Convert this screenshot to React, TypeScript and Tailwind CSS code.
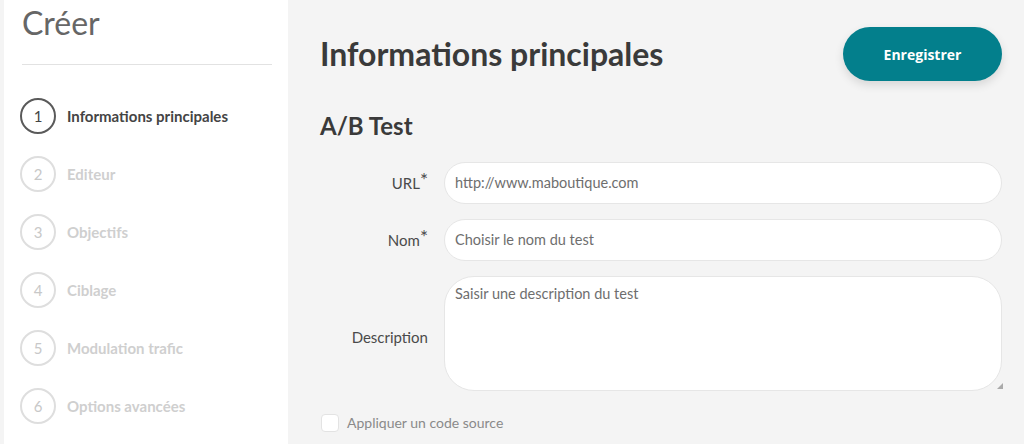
import React from "react";

const STEPS = [
  "Informations principales",
  "Editeur",
  "Objectifs",
  "Ciblage",
  "Modulation trafic",
  "Options avancées",
];

function Step({ n, label, active }: { n: number; label: string; active: boolean }) {
  return (
    <div className="flex items-center h-[58px]">
      <div
        className={
          "w-[36px] h-[36px] rounded-full flex items-center justify-center text-[15px] border-2 " +
          (active ? "border-[#5a5a5a] text-[#444]" : "border-[#dedede] text-[#c8c8c8]")
        }
      >
        {n}
      </div>
      <span
        className={
          "ml-[11px] text-[15px] font-bold " + (active ? "text-[#444]" : "text-[#cfcfcf]")
        }
      >
        {label}
      </span>
    </div>
  );
}

function Label({ children, required }: { children: React.ReactNode; required?: boolean }) {
  return (
    <div className="w-[124px] pr-[16px] text-right text-[15px] text-[#4a4a4a] shrink-0">
      {children}
      {required && <sup className="text-[19px] relative top-[-2px]">*</sup>}
    </div>
  );
}

export default function App() {
  return (
    <div
      className="w-[1024px] h-[444px] bg-[#f4f4f4] flex overflow-hidden"
      style={{ fontFamily: "Lato, 'Noto Sans', sans-serif" }}
    >
      {/* Sidebar */}
      <aside className="ml-[4px] w-[284px] h-full bg-white pl-[18px] pr-[16px] pt-[3px] shrink-0">
        <h1 className="text-[32px] font-normal text-[#666] leading-[40px]">Créer</h1>
        <div className="mt-[21px] h-px bg-[#e2e2e2]" />
        <div className="mt-[22px] -ml-[2px] flex flex-col">
          {STEPS.map((s, i) => (
            <Step key={s} n={i + 1} label={s} active={i === 0} />
          ))}
        </div>
      </aside>

      {/* Main */}
      <main className="flex-1 pl-[32px] pr-[22px] pt-[27px]">
        <div className="flex items-center justify-between">
          <h2 className="text-[32px] font-bold text-[#3a3a3a] leading-[54px]">
            Informations principales
          </h2>
          <button
            className="w-[159px] h-[54px] rounded-full bg-[#037f8c] text-white text-[14px] font-bold shadow-[0_4px_10px_rgba(0,0,0,0.12)]"
            style={{ fontFamily: "'Open Sans', sans-serif" }}
          >
            Enregistrer
          </button>
        </div>

        <h3 className="mt-[30px] text-[24px] font-bold text-[#3a3a3a] leading-[30px]">A/B Test</h3>

        <div className="mt-[21px] flex flex-col gap-[15px]">
          <div className="flex items-center">
            <Label required>URL</Label>
            <div className="flex-1 h-[42px] rounded-full bg-white border border-[#e6e6e6] flex items-center px-[10px] text-[14.5px] text-[#6e6e6e]">
              http://www.maboutique.com
            </div>
          </div>
          <div className="flex items-center">
            <Label required>Nom</Label>
            <div className="flex-1 h-[42px] rounded-full bg-white border border-[#e6e6e6] flex items-center px-[10px] text-[14.5px] text-[#6e6e6e]">
              Choisir le nom du test
            </div>
          </div>
          <div className="flex items-center">
            <div className="pt-[8px]">
              <Label>Description</Label>
            </div>
            <div className="relative flex-1 h-[115px] rounded-[30px] bg-white border border-[#e6e6e6] px-[10px] pt-[6px] text-[14.5px] text-[#6e6e6e]">
              Saisir une description du test
              <svg className="absolute right-[-2px] bottom-[1px]" width="6" height="6" viewBox="0 0 6 6">
                <path d="M6 0 L6 6 L0 6 Z" fill="#aaa" />
              </svg>
            </div>
          </div>
        </div>

        <label className="mt-[21px] flex items-center">
          <span className="w-[18px] h-[18px] rounded-[4px] bg-white border border-[#e3e3e3] ml-[1px]" />
          <span className="ml-[8px] text-[14px] text-[#8a8a8a]">Appliquer un code source</span>
        </label>
      </main>
    </div>
  );
}
